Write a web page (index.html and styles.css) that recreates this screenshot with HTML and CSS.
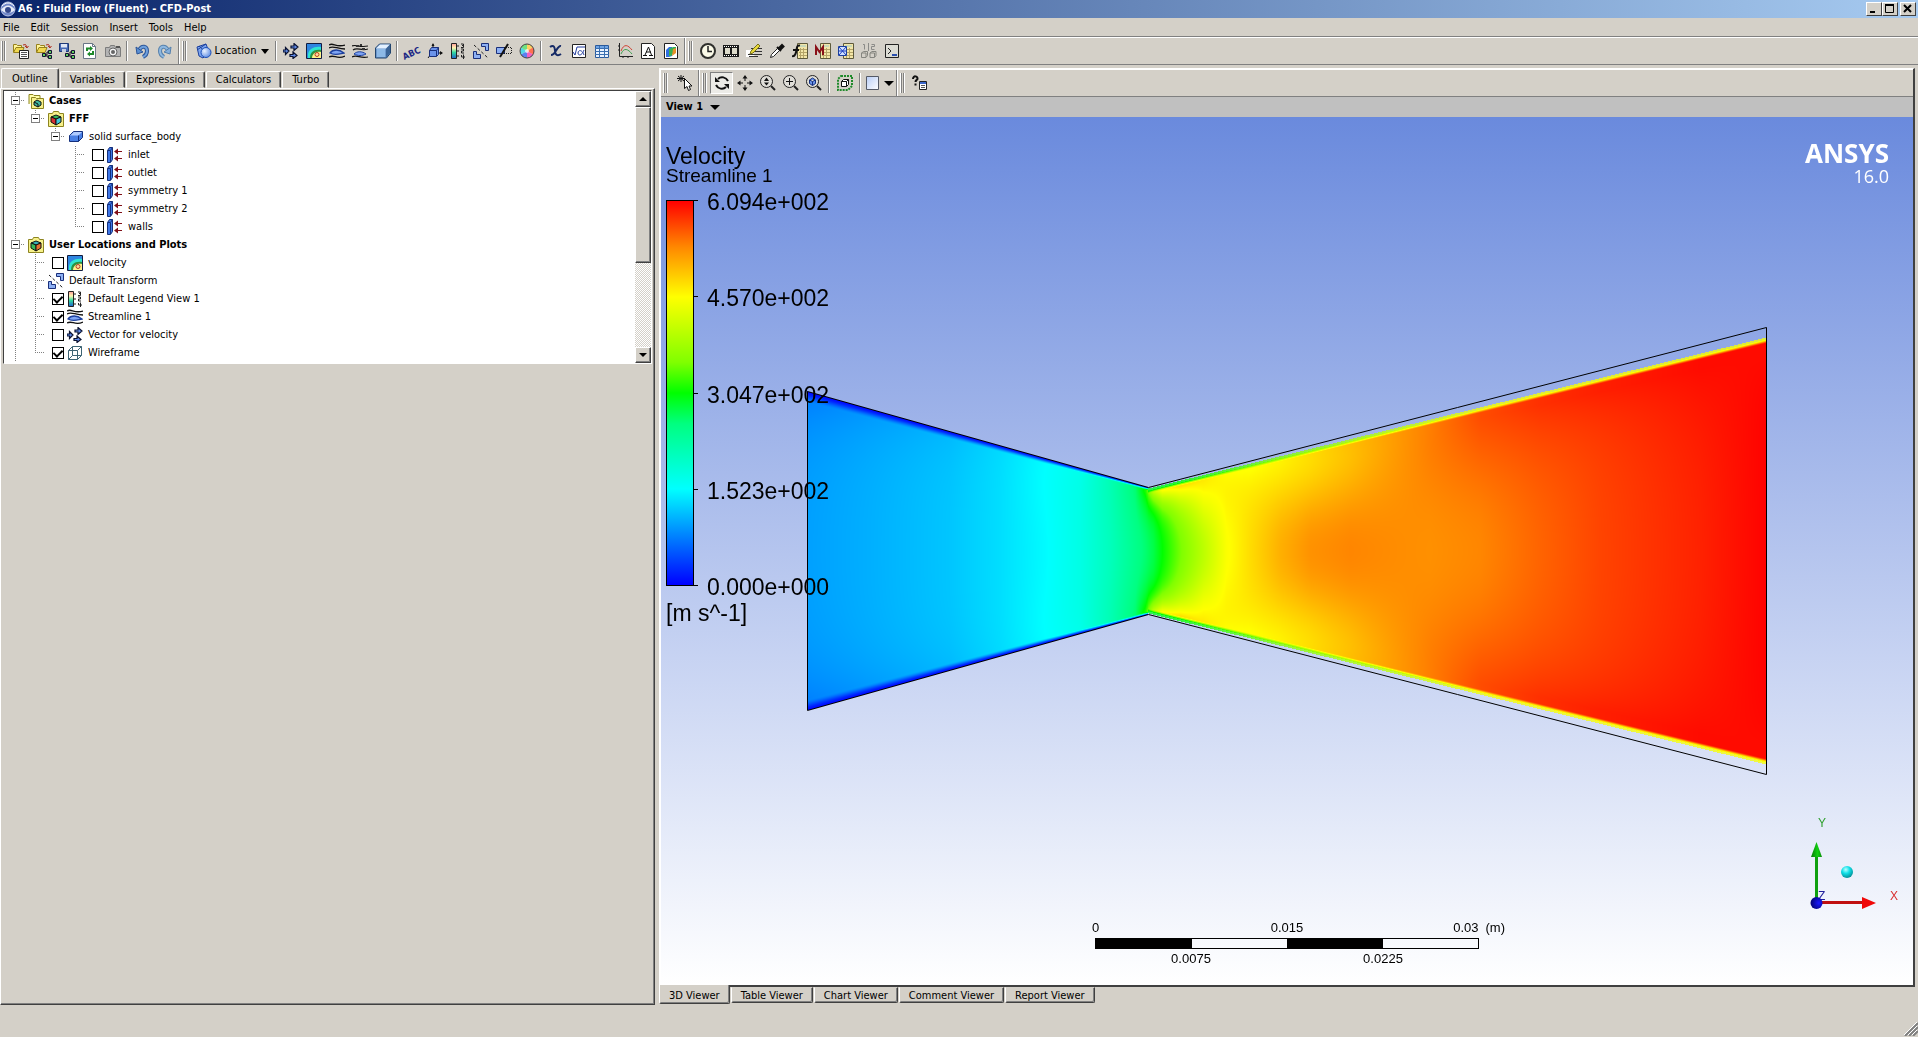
FILE: index.html
```html
<!DOCTYPE html>
<html lang="en">
<head>
  <meta charset="UTF-8">
  <meta name="viewport" content="width=device-width, initial-scale=1.0">
  <title>A6 : Fluid Flow (Fluent) - CFD-Post</title>
  <link rel="stylesheet" href="styles.css">
</head>
<body>
  <!-- icon set -->
  <svg class="sprite" aria-hidden="true">
    <defs>
      <linearGradient id="rainbow" x1="0" y1="0" x2="0" y2="1">
        <stop offset="0" stop-color="#ff9a9a"/><stop offset=".3" stop-color="#fff6b0"/>
        <stop offset=".6" stop-color="#30d8a0"/><stop offset="1" stop-color="#2060d0"/>
      </linearGradient>
      <linearGradient id="swatch" x1="0" y1="0" x2="1" y2="1">
        <stop offset="0" stop-color="#b8cdf6"/><stop offset="1" stop-color="#fff"/>
      </linearGradient>
      <radialGradient id="lens" cx=".35" cy=".35" r=".8">
        <stop offset="0" stop-color="#eaf2ff"/><stop offset="1" stop-color="#4c7fe0"/>
      </radialGradient>
    </defs>
    <symbol id="i-load" viewBox="0 0 16 16">
      <path d="M.5 9V1.500h3l1 1h4v2" fill="#fff59a" stroke="#96801c"/><path d="M.5 9.500L3 4.500h8L9 9.500z" fill="#f0d850" stroke="#96801c"/>
      <path d="M10 2q3-2 4 2m-2-1l2 2 1.500-2" fill="none" stroke="#b03020"/>
      <path d="M6.500 7.500h9v8h-9z" fill="#fff" stroke="#222"/><path d="M8 9.500h6M8 11.500h6M8 13.500h6" stroke="#555"/>
    </symbol>
    <symbol id="i-loadstate" viewBox="0 0 16 16">
      <path d="M.5 9V1.500h3l1 1h4v2" fill="#fff59a" stroke="#96801c"/><path d="M.5 9.500L3 4.500h8L9 9.500z" fill="#f0d850" stroke="#96801c"/>
      <path d="M10 2q3-2 4 2m-2-1l2 2 1.500-2" fill="none" stroke="#b03020"/>
      <path d="M8 12h3M11 9v5h2M11 9h2" stroke="#111" fill="none"/>
      <path d="M6.500 10.500h3v3h-3zM12.500 7.500h3v3h-3zM12.500 12.500h3v3h-3z" fill="#5fd05a" stroke="#113"/>
    </symbol>
    <symbol id="i-savestate" viewBox="0 0 16 16">
      <path d="M.5.500h9v8h-9z" fill="#4668b4" stroke="#203a78"/><path d="M2 1h6v3.500H2z" fill="#dfe6f4"/><path d="M3 6h4v3H3z" fill="#c8d0e0"/>
      <path d="M8 12h3M11 9v5h2M11 9h2" stroke="#111" fill="none"/>
      <path d="M6.500 10.500h3v3h-3zM12.500 7.500h3v3h-3zM12.500 12.500h3v3h-3z" fill="#5fd05a" stroke="#113"/>
    </symbol>
    <symbol id="i-refresh" viewBox="0 0 16 16">
      <path d="M1.500.500h9l3 3v12h-12z" fill="#fff" stroke="#6a7686"/><path d="M10.500.500v3h3" fill="none" stroke="#6a7686"/>
      <path d="M5 8V5.500h4M11 8v3H7" fill="none" stroke="#1f8a2a" stroke-width="2"/><path d="M8 3l3 2.500L8 8zM8 8.500L5 11l3 2.500z" fill="#1f8a2a"/>
    </symbol>
    <symbol id="i-camera" viewBox="0 0 16 16">
      <path d="M.5 4.500h4l1-2h4l1 2h5v9H.500z" fill="#b3b3b3" stroke="#7c7c7c"/><path d="M11 3h4v2h-4z" fill="#555"/>
      <circle cx="8" cy="9" r="4" fill="#f2f2f2" stroke="#666"/><circle cx="8" cy="9" r="2" fill="#666"/>
    </symbol>
    <symbol id="i-undo" viewBox="0 0 16 16">
      <path d="M5 7c3-5 8-4 8 1 0 3-2 5-4 6" fill="none" stroke="#2c5598" stroke-width="4"/><path d="M5 7c3-5 8-4 8 1 0 3-2 5-4 6" fill="none" stroke="#6fa0dc" stroke-width="2"/>
      <path d="M2 4l1 7 6-2z" fill="#5a8fd2" stroke="#2c5598"/>
    </symbol>
    <symbol id="i-redo" viewBox="0 0 16 16">
      <path d="M11 7C8 2 3 3 3 8c0 3 2 5 4 6" fill="none" stroke="#5580ac" stroke-width="4"/><path d="M11 7C8 2 3 3 3 8c0 3 2 5 4 6" fill="none" stroke="#8fb8e0" stroke-width="2"/>
      <path d="M14 4l-1 7-6-2z" fill="#86b0dc" stroke="#5580ac"/>
    </symbol>
    <symbol id="i-location" viewBox="0 0 16 16">
      <path d="M1 4l9-3 3 8-6 6-4-2z" fill="#7ea6f0" stroke="#1c3f9c"/><path d="M3 3l10 9M1 7l9-6" stroke="#1c3f9c"/>
      <circle cx="10" cy="9.500" r="5" fill="url(#lens)" stroke="#1c4fb8"/>
    </symbol>
    <symbol id="i-vector" viewBox="0 0 16 16">
      <path d="M0 7h2.500V4.500L6 8l-3.500 3.500V9H0z" fill="#5f8ae8" stroke="#0a1230" stroke-width="1.200"/>
      <path d="M8 3h3V.500L15 4l-4 3.500V5H8zM7 11.500h3V9l4 3.500-4 3V13.500H7z" fill="#5f8ae8" stroke="#0a1230" stroke-width="1.200"/>
    </symbol>
    <symbol id="i-contour" viewBox="0 0 16 16">
      <path d="M1 1h14v14H1z" fill="#2f86e0"/><path d="M2 15V11C3 6 8 3 15 4v11z" fill="#2fe5d0"/>
      <path d="M4 15c0-6 4-9 11-8v8z" fill="#2f9040"/><path d="M6 15c0-4 4-7 9-6v6z" fill="#fff28a"/>
      <circle cx="11" cy="11.500" r="2" fill="#ffd9a0" stroke="#b84020"/><path d="M.5.500h15v15H.500z" fill="none" stroke="#101c40"/>
    </symbol>
    <symbol id="i-stream" viewBox="0 0 16 16">
      <path d="M0 2c4-3 7 3 16 0M0 5c4-3 8 1 16 1M0 14c5-3 8 3 16-1" fill="none" stroke="#111" stroke-width="1.300"/>
      <path d="M1 10c3-4 9-4 14 0-5 1-9 3-14 0z" fill="#7ea4f4" stroke="#1c3f9c" stroke-width="1.300"/>
    </symbol>
    <symbol id="i-particle" viewBox="0 0 16 16">
      <path d="M0 3c4-2 7 2 16 0M1 7c4-3 8 1 15-1M0 14c5-3 8 2 16 0" fill="none" stroke="#111" stroke-width="1.200"/>
      <path d="M2 11c3-3 8-3 12 0-4 2-8 2-12 0z" fill="#7ea4f4" stroke="#1c3f9c"/>
      <path d="M4 2h3v2H4zM10 5h3v2h-3zM8 1h2v2H8z" fill="#333"/>
    </symbol>
    <symbol id="i-cube" viewBox="0 0 16 16">
      <path d="M.5 5l4-4h11v9l-4 5H.500z" fill="#6d97cc" stroke="#22456e"/><path d="M1 5.500l4-4h10l-3.500 4z" fill="#e2f0ff"/><path d="M11 5.500l4-4V10L11 14.500z" fill="#3b6496"/><path d="M2 6h8v8H2z" fill="#8db9e6"/>
    </symbol>
    <symbol id="i-coord" viewBox="0 0 16 16">
      <path d="M6 8V1M8 10h7M4 11l-3 4" stroke="#111"/><path d="M6 0L4.500 3h3zM16 10l-3-2v4z" fill="#111"/>
      <path d="M2.500 7.500l2-3h7v7l-2 2h-7z" fill="#6b93ea" stroke="#1a2f7a"/><path d="M2.500 7.500h7v6M9.500 7.500l2-3" fill="none" stroke="#1a2f7a"/>
    </symbol>
    <symbol id="i-legend" viewBox="0 0 16 16">
      <path d="M1.500.500h5v15h-5z" fill="url(#rainbow)" stroke="#222"/><path d="M7 3h2M7 8h2M7 13h2" stroke="#222"/>
      <path d="M11 1h2.500v3.500H11M12 2.500h2M11 6h2.500v2H11.500v2H14M13.500 11.500v4.500M11.500 12v2H15" fill="none" stroke="#222"/>
    </symbol>
    <symbol id="i-transform" viewBox="0 0 16 16">
      <path d="M1 2l14 13" stroke="#222" stroke-dasharray="3 2"/><path d="M8.500.500h7v7h-3v-4h-4z" fill="#8db0f4" stroke="#1a2f7a"/><path d="M.5 8.500h3v3h4v4h-7z" fill="#8db0f4" stroke="#1a2f7a"/>
    </symbol>
    <symbol id="i-clip" viewBox="0 0 16 16">
      <path d="M.5 4.500h8v6h-8z" fill="#8db0f4" stroke="#1a2f7a"/><path d="M8 4.500h7.500v6H8" fill="none" stroke="#222" stroke-dasharray="1 1"/><path d="M4 14L12 1" stroke="#111" stroke-width="2"/>
    </symbol>
    <symbol id="i-color" viewBox="0 0 16 16">
      <path d="M8 8V1a7 7 0 0 1 6 3.500z" fill="#ffd060"/><path d="M8 8l6-3.500a7 7 0 0 1 0 7z" fill="#ff7050"/><path d="M8 8l6 3.500A7 7 0 0 1 8 15z" fill="#f060c0"/>
      <path d="M8 8v7a7 7 0 0 1-6-3.500z" fill="#5a80f0"/><path d="M8 8l-6 3.500a7 7 0 0 1 0-7z" fill="#50d8e8"/><path d="M8 8L2 4.500A7 7 0 0 1 8 1z" fill="#70e080"/>
      <circle cx="8" cy="8" r="7" fill="none" stroke="#444"/><circle cx="8" cy="8" r="2" fill="#fff" opacity=".7"/>
    </symbol>
    <symbol id="i-var" viewBox="0 0 16 16">
      <path d="M2 4c4-3 5 1 5 4s2 6 6 3M13 3c-4-1-5 9-10 9" fill="none" stroke="#152a66" stroke-width="2"/>
    </symbol>
    <symbol id="i-expr" viewBox="0 0 16 16">
      <path d="M1.500 1.500h13v13h-13z" fill="#fff" stroke="#222"/><path d="M2 9l2 3 2-8h8" fill="none" stroke="#203a9c"/><path d="M13 7c-2 6-6 6-6 3s4-4 6 2" fill="none" stroke="#203a9c"/>
    </symbol>
    <symbol id="i-table" viewBox="0 0 16 16">
      <path d="M1.500 2.500h13v12h-13z" fill="#e8f2ff" stroke="#2a5a9c"/><path d="M2 3h12v2H2z" fill="#6ea4e4"/><path d="M1 5.500h14M1 8.500h14M1 11.500h14M5.500 3v12M10.500 3v12" stroke="#3a6fb0"/>
    </symbol>
    <symbol id="i-chart" viewBox="0 0 16 16">
      <path d="M2.500 0v13.500H16M1 3h2M1 7h2M6 13v2M11 13v2" fill="none" stroke="#222"/><path d="M4 8c3-8 7-6 11-1" fill="none" stroke="#d04030"/><path d="M4 11c3-7 7-5 11 0" fill="none" stroke="#40a050"/>
    </symbol>
    <symbol id="i-text" viewBox="0 0 16 16">
      <path d="M1.500.500h10l3 3v12h-13z" fill="#fff" stroke="#222"/><path d="M3 12.500h4M9 12.500h4M5 12l3.500-8L11.500 12M6 9h5" fill="none" stroke="#111"/>
    </symbol>
    <symbol id="i-figure" viewBox="0 0 16 16">
      <path d="M1.500.500h10l3 3v12h-13z" fill="#fff" stroke="#222"/><path d="M3 7l3-3h3v9l-3 1H3z" fill="#2f6fe0"/><path d="M6 6l4-2h3v3L8 13H6z" fill="#38b050"/><path d="M10 6l3-1v5l-4 3z" fill="#e8902a"/>
    </symbol>
    <symbol id="i-clock" viewBox="0 0 16 16"><circle cx="8" cy="8" r="7" fill="#fbfae8" stroke="#2f2f2c" stroke-width="2"/><path d="M8 3v5.500h4" fill="none" stroke="#222" stroke-width="1.500"/></symbol>
    <symbol id="i-film" viewBox="0 0 16 16"><path d="M0 2h16v12H0z" fill="#1a1a1a"/><path d="M2 5h5v6H2zM9 5h5v6H9z" fill="#dedccc"/><path d="M1 3.500h14M1 12.500h14" stroke="#fff" stroke-dasharray="1 1"/></symbol>
    <symbol id="i-note" viewBox="0 0 16 16"><path d="M0 7h6l3 7H0z" fill="#fff"/><path d="M5 5.500h11M8 8.500h8M2 11.500h14M3 13.500h9" stroke="#333"/><path d="M4 11l1-3 7-7 2 2-7 7z" fill="#e8d83a" stroke="#77701a"/></symbol>
    <symbol id="i-probe" viewBox="0 0 16 16"><path d="M1.500 14.500l1-3 6-6 2 2-6 6z" fill="#fff" stroke="#222"/><path d="M8 4l4 4M10 5l3-3 1.500 1.500-3 3z" stroke="#111" stroke-width="2"/></symbol>
    <symbol id="i-calc" viewBox="0 0 16 16"><path d="M5.500.500h10v15h-10z" fill="#f3e6a8" stroke="#5e5a3c"/><path d="M7 2h7v2H7z" fill="#c8d8b8"/><path d="M7 6.500h8M7 9.500h8M7 12.500h8M8.500 5v10M11.500 5v10" stroke="#b5a468"/></symbol>
    <symbol id="i-fcalc" viewBox="0 0 16 16"><use href="#i-calc"/><path d="M8 2.500C5 2 5 4 4.500 7S3 14 0 13M1 7h6" fill="none" stroke="#111" stroke-width="2"/></symbol>
    <symbol id="i-mcalc" viewBox="0 0 16 16"><use href="#i-calc"/><path d="M1 12V4l3.500 5L8 4v8" fill="none" stroke="#8a1018" stroke-width="2"/></symbol>
    <symbol id="i-xcalc" viewBox="0 0 16 16"><use href="#i-calc"/><path d="M.5 3.500h8v9h-8z" fill="#cfe0ff" stroke="#1c3f9c"/><path d="M1 4l7 8M8 4l-7 8M1 8h7" stroke="#1c3fc0"/></symbol>
    <symbol id="i-compare" viewBox="0 0 16 16"><path d="M2 1.500h1.500v5M10.500 1.500h3v2h-3v3h3M7.500 0v8" fill="none" stroke="#8b8b88"/><path d="M.5 10l2-1.500h4v4L5 14.500H.500zM9 10l2-1.500h4v4l-1.500 2H9zM.500 10H5v4M9 10h4.500v4" fill="none" stroke="#85857f"/></symbol>
    <symbol id="i-console" viewBox="0 0 16 16"><path d="M1.500 1.500h13v13h-13z" fill="#dcdcd4" stroke="#222"/><path d="M4 5l3 3-3 3" fill="none" stroke="#222"/><path d="M8 12h5" stroke="#2a50b0" stroke-width="2"/></symbol>
    <symbol id="i-select" viewBox="0 0 16 16"><path d="M4 0v7M1 1l6 5M7 1L1 6M0 3.500h8" stroke="#111"/><path d="M7.500 3.500v10l2.500-2 1.500 4 2-1-1.500-3.500h3z" fill="#fff" stroke="#111"/></symbol>
    <symbol id="i-rotate" viewBox="0 0 16 16"><path d="M4 4c3-3 8-2 10 2M12 12c-3 3-8 2-10-2" fill="none" stroke="#111" stroke-width="2"/><path d="M1 2v5h5zM15 14V9h-5z" fill="#111"/></symbol>
    <symbol id="i-pan" viewBox="0 0 16 16"><path d="M8 3v3M8 10v3M3 8h3M10 8h3" stroke="#111"/><path d="M8 0L5.500 3.500h5zM8 16l-2.500-3.500h5zM0 8l3.500-2.500v5zM16 8l-3.500-2.500v5z" fill="#111"/></symbol>
    <symbol id="i-zoom" viewBox="0 0 16 16"><circle cx="6.500" cy="6.500" r="6" fill="#e0ded8" stroke="#222"/><path d="M11 11l4 4" stroke="#222" stroke-width="2"/><path d="M6.500 2.500L4 6h5zM6.500 10.500L4 7.500h5z" fill="#111"/></symbol>
    <symbol id="i-zoomin" viewBox="0 0 16 16"><circle cx="6.500" cy="6.500" r="6" fill="#e0ded8" stroke="#222"/><path d="M11 11l4 4" stroke="#222" stroke-width="2"/><path d="M3 6.500h7M6.500 3v7" stroke="#111"/></symbol>
    <symbol id="i-fit" viewBox="0 0 16 16"><circle cx="6.500" cy="6.500" r="6" fill="#e0ded8" stroke="#222"/><path d="M11 11l4 4" stroke="#222" stroke-width="2"/><path d="M3.500 5l3-2 3 2v3.500l-3 2-3-2zM3.500 5l3 1.500 3-1.500M6.500 6.500v4" fill="#6b93ea" stroke="#15307c"/></symbol>
    <symbol id="i-highlight" viewBox="0 0 16 16"><path d="M4 1h11v10l-4 4H1V4z" fill="none" stroke="#1f8a2a" stroke-width="2" stroke-dasharray="2 1"/><path d="M4.500 6.500l2-2h5v5l-2 2h-5zM4.500 6.500h5v5M9.500 6.500l2-2" fill="#fff" stroke="#111"/></symbol>
    <symbol id="i-swatch" viewBox="0 0 16 16"><path d="M1.500 1.500h12v13h-12z" fill="url(#swatch)" stroke="#555a66"/></symbol>
    <symbol id="i-help" viewBox="0 0 16 16"><path d="M1 4c0-4 5-3 4.500 0C5 5 3.500 5 3.500 7M3.500 8.500v2" fill="none" stroke="#111" stroke-width="2"/><path d="M7.500 6.500h7v8h-7z" fill="#fff" stroke="#222"/><path d="M8 7h6v2H8z" fill="#3b66c8"/><path d="M9 10.500h4M9 12.500h4" stroke="#555"/></symbol>
    <symbol id="i-case" viewBox="0 0 16 16"><path d="M1 11V1.500h4l1 1h6V5" fill="#ffffa8" stroke="#8d8420"/><path d="M3.500 15.500V4.500h4l1 1h7v10z" fill="#f6f08a" stroke="#8d8420"/><path d="M6 9l3-2 4 2v3l-3 2-4-2z" fill="#3fb8a0" stroke="#111"/><path d="M6 9l4 2v3" fill="none" stroke="#111"/></symbol>
    <symbol id="i-fff" viewBox="0 0 16 16"><path d="M.5 15.500v-13h4l1-2h5l1 2h4v13z" fill="#f6f08a" stroke="#8d8420"/><path d="M3 6l5-2 5 2-5 2z" fill="#38b858" stroke="#111"/><path d="M3 6l5 2v6l-5-3z" fill="#d83030" stroke="#111"/><path d="M13 6L8 8v6l5-3z" fill="#3fc8d8" stroke="#111"/></symbol>
    <symbol id="i-plots" viewBox="0 0 16 16"><path d="M.5 15.500v-13h4l1-2h5l1 2h4v13z" fill="#f6f08a" stroke="#8d8420"/><path d="M3 6l5-2 5 2-5 2z" fill="#38b0b8" stroke="#111"/><path d="M3 6l5 2v6l-5-3z" fill="#38b858" stroke="#111"/><path d="M13 6L8 8v6l5-3z" fill="#e87030" stroke="#111"/></symbol>
    <symbol id="i-body" viewBox="0 0 16 16"><path d="M1.500 6.500l4-4h9v6l-4 4h-9z" fill="#4a80e4" stroke="#15307c"/><path d="M2 6.500l4-3.500h8l-3.500 3.500z" fill="#b0ccff"/><path d="M10.500 6.500v6" stroke="#15307c"/></symbol>
    <symbol id="i-bound" viewBox="0 0 16 16"><path d="M.5 3.500l2-3h3v12l-2 3h-3z" fill="#3f78e8" stroke="#15307c"/><path d="M3.500 4v11M.500 3.500h3l2-3" fill="none" stroke="#15307c"/><path d="M10 4.500h5M10 11.500h5" stroke="#801018"/><path d="M7 4.500L11 1.500v6zM7 11.500L11 8.500v6z" fill="#801018"/></symbol>
    <symbol id="i-wire" viewBox="0 0 16 16"><path d="M1.500 5.500h9v9h-9zM5.500 1.500h9v9h-9zM1.500 5.500l4-4M10.500 5.500l4-4M10.500 14.500l4-4M1.500 14.500l4-4" fill="none" stroke="#3d6474"/></symbol>
  </svg>

  <header class="titlebar">
    <svg class="app-icon" viewBox="0 0 16 16"><circle cx="8" cy="8" r="7" fill="#6f86c8" stroke="#b8c4e8"/><path d="M1 9c4-6 10-6 14 0-4 4-10 4-14 0z" fill="#e8ecf8"/><circle cx="8" cy="9" r="3" fill="#33488c"/><path d="M2 5c4-4 8-4 12 0" fill="none" stroke="#fff"/></svg>
    <h1>A6 : Fluid Flow (Fluent) - CFD-Post</h1>
    <div class="window-buttons">
      <button aria-label="Minimize"><svg viewBox="0 0 10 10"><path d="M1 8h5" stroke="#000" stroke-width="2"/></svg></button>
      <button aria-label="Maximize"><svg viewBox="0 0 10 10"><path d="M.5 1.500h8v7h-8z" fill="none" stroke="#000"/><path d="M0 1h9" stroke="#000" stroke-width="2"/></svg></button>
      <button class="close" aria-label="Close"><svg viewBox="0 0 10 10"><path d="M1 1l7 7M8 1L1 8" stroke="#000" stroke-width="2"/></svg></button>
    </div>
  </header>

  <nav class="menubar">
    <button>File</button><button>Edit</button><button>Session</button><button>Insert</button><button>Tools</button><button>Help</button>
  </nav>

  <div class="toolbar main-toolbar">
    <div class="group">
      <span class="grip"></span>
      <button aria-label="Load results"><svg><use href="#i-load"/></svg></button>
      <button aria-label="Load state"><svg><use href="#i-loadstate"/></svg></button>
      <button aria-label="Save state"><svg><use href="#i-savestate"/></svg></button>
      <button aria-label="Refresh"><svg><use href="#i-refresh"/></svg></button>
      <button aria-label="Save picture"><svg><use href="#i-camera"/></svg></button>
      <span class="sep"></span>
      <button aria-label="Undo"><svg><use href="#i-undo"/></svg></button>
      <button aria-label="Redo"><svg><use href="#i-redo"/></svg></button>
    </div>
    <div class="group">
      <span class="grip"></span>
      <button class="location"><svg><use href="#i-location"/></svg>Location<span class="arrow"></span></button>
      <span class="sep"></span>
      <button aria-label="Vector"><svg><use href="#i-vector"/></svg></button>
      <button aria-label="Contour"><svg><use href="#i-contour"/></svg></button>
      <button aria-label="Streamline"><svg><use href="#i-stream"/></svg></button>
      <button aria-label="Particle track"><svg><use href="#i-particle"/></svg></button>
      <button aria-label="Volume rendering"><svg><use href="#i-cube"/></svg></button>
      <span class="sep"></span>
      <button aria-label="Text"><svg class="abc" viewBox="0 0 20 16"><text x="0" y="14" transform="rotate(-24 8 10)">ABC</text></svg></button>
      <button aria-label="Coordinate frame"><svg><use href="#i-coord"/></svg></button>
      <button aria-label="Legend"><svg><use href="#i-legend"/></svg></button>
      <button aria-label="Instance transform"><svg><use href="#i-transform"/></svg></button>
      <button aria-label="Clip plane"><svg><use href="#i-clip"/></svg></button>
      <button aria-label="Color map"><svg><use href="#i-color"/></svg></button>
      <span class="sep"></span>
      <button aria-label="Variable"><svg><use href="#i-var"/></svg></button>
      <button aria-label="Expression"><svg><use href="#i-expr"/></svg></button>
      <button aria-label="Table"><svg><use href="#i-table"/></svg></button>
      <button aria-label="Chart"><svg><use href="#i-chart"/></svg></button>
      <button aria-label="Comment"><svg><use href="#i-text"/></svg></button>
      <button aria-label="Figure"><svg><use href="#i-figure"/></svg></button>
    </div>
    <div class="group">
      <span class="grip"></span>
      <button aria-label="Timestep selector"><svg><use href="#i-clock"/></svg></button>
      <button aria-label="Animation"><svg><use href="#i-film"/></svg></button>
      <button aria-label="Quick editor"><svg><use href="#i-note"/></svg></button>
      <button aria-label="Probe"><svg><use href="#i-probe"/></svg></button>
      <button aria-label="Function calculator"><svg><use href="#i-fcalc"/></svg></button>
      <button aria-label="Macro calculator"><svg><use href="#i-mcalc"/></svg></button>
      <button aria-label="Mesh calculator"><svg><use href="#i-xcalc"/></svg></button>
      <button aria-label="Case comparison" disabled><svg><use href="#i-compare"/></svg></button>
      <button aria-label="Command editor"><svg><use href="#i-console"/></svg></button>
    </div>
  </div>

  <main class="workspace">
    <section class="side">
      <div class="tabs">
        <button class="active">Outline</button><button>Variables</button><button>Expressions</button><button>Calculators</button><button>Turbo</button>
      </div>
      <div class="page">
        <div class="tree-box">
          <div class="tree">
            <div class="row"><i class="cell node"></i><svg><use href="#i-case"/></svg><b>Cases</b></div>
            <div class="row"><i class="cell line"></i><i class="cell node last"></i><svg><use href="#i-fff"/></svg><b>FFF</b></div>
            <div class="row"><i class="cell line"></i><i class="cell"></i><i class="cell node last"></i><svg><use href="#i-body"/></svg><span>solid surface_body</span></div>
            <div class="row"><i class="cell line"></i><i class="cell"></i><i class="cell"></i><i class="cell tee"></i><input type="checkbox" id="c1"><svg><use href="#i-bound"/></svg><label for="c1">inlet</label></div>
            <div class="row"><i class="cell line"></i><i class="cell"></i><i class="cell"></i><i class="cell tee"></i><input type="checkbox" id="c2"><svg><use href="#i-bound"/></svg><label for="c2">outlet</label></div>
            <div class="row"><i class="cell line"></i><i class="cell"></i><i class="cell"></i><i class="cell tee"></i><input type="checkbox" id="c3"><svg><use href="#i-bound"/></svg><label for="c3">symmetry 1</label></div>
            <div class="row"><i class="cell line"></i><i class="cell"></i><i class="cell"></i><i class="cell tee"></i><input type="checkbox" id="c4"><svg><use href="#i-bound"/></svg><label for="c4">symmetry 2</label></div>
            <div class="row"><i class="cell line"></i><i class="cell"></i><i class="cell"></i><i class="cell tee last"></i><input type="checkbox" id="c5"><svg><use href="#i-bound"/></svg><label for="c5">walls</label></div>
            <div class="row"><i class="cell node"></i><svg><use href="#i-plots"/></svg><b>User Locations and Plots</b></div>
            <div class="row"><i class="cell line"></i><i class="cell tee"></i><input type="checkbox" id="c6"><svg><use href="#i-contour"/></svg><label for="c6">velocity</label></div>
            <div class="row"><i class="cell line"></i><i class="cell tee"></i><svg><use href="#i-transform"/></svg><span>Default Transform</span></div>
            <div class="row"><i class="cell line"></i><i class="cell tee"></i><input type="checkbox" id="c7" checked><svg><use href="#i-legend"/></svg><label for="c7">Default Legend View 1</label></div>
            <div class="row"><i class="cell line"></i><i class="cell tee"></i><input type="checkbox" id="c8" checked><svg><use href="#i-stream"/></svg><label for="c8">Streamline 1</label></div>
            <div class="row"><i class="cell line"></i><i class="cell tee"></i><input type="checkbox" id="c9"><svg><use href="#i-vector"/></svg><label for="c9">Vector for velocity</label></div>
            <div class="row"><i class="cell line"></i><i class="cell tee last"></i><input type="checkbox" id="c10" checked><svg><use href="#i-wire"/></svg><label for="c10">Wireframe</label></div>
          </div>
          <div class="scrollbar">
            <button aria-label="Scroll up"><span class="up"></span></button>
            <div class="thumb"></div>
            <div class="track"></div>
            <button aria-label="Scroll down"><span class="down"></span></button>
          </div>
        </div>
      </div>
    </section>

    <section class="viewer">
      <div class="frame">
        <div class="toolbar">
          <div class="group">
            <span class="grip"></span>
            <button aria-label="Select"><svg><use href="#i-select"/></svg></button>
          </div>
          <div class="group">
            <span class="grip"></span>
            <button class="pressed" aria-label="Rotate"><svg><use href="#i-rotate"/></svg></button>
            <button aria-label="Pan"><svg><use href="#i-pan"/></svg></button>
            <button aria-label="Zoom"><svg><use href="#i-zoom"/></svg></button>
            <button aria-label="Zoom box"><svg><use href="#i-zoomin"/></svg></button>
            <button aria-label="Fit view"><svg><use href="#i-fit"/></svg></button>
            <span class="sep wide"></span>
            <button aria-label="Toggle highlighting"><svg><use href="#i-highlight"/></svg></button>
            <span class="sep wide"></span>
            <button class="layout" aria-label="Viewport layout"><svg><use href="#i-swatch"/></svg><span class="arrow"></span></button>
          </div>
          <div class="group">
            <span class="grip"></span>
            <button aria-label="Help on viewer"><svg><use href="#i-help"/></svg></button>
          </div>
        </div>
        <div class="viewbar"><button>View 1<span class="arrow"></span></button></div>
        <div class="scene">
          <canvas id="field"></canvas>
          <div class="legend">
            <div class="legend-title">Velocity</div>
            <div class="legend-sub">Streamline 1</div>
            <div class="legend-body">
              <div class="legend-bar"></div>
              <ul class="legend-labels">
                <li>6.094e+002</li><li>4.570e+002</li><li>3.047e+002</li><li>1.523e+002</li><li>0.000e+000</li>
              </ul>
            </div>
            <div class="legend-unit">[m s^-1]</div>
          </div>
          <div class="brand"><strong>ANSYS</strong><span>16.0</span></div>
          <div class="ruler">
            <div class="ruler-top"><span>0</span><span>0.015</span><span>0.03<em>(m)</em></span></div>
            <div class="ruler-bar"><i></i><i></i><i></i><i></i></div>
            <div class="ruler-bottom"><span>0.0075</span><span>0.0225</span></div>
          </div>
          <svg class="triad" viewBox="0 0 105 100">
            <defs>
              <radialGradient id="ball" cx=".4" cy=".3" r=".8"><stop offset="0" stop-color="#b8ffff"/><stop offset=".4" stop-color="#10e0e8"/><stop offset="1" stop-color="#007c84"/></radialGradient>
              <radialGradient id="origin" cx=".7" cy=".5" r=".8"><stop offset="0" stop-color="#1818ff"/><stop offset="1" stop-color="#000060"/></radialGradient>
              <linearGradient id="yhead"><stop offset="0" stop-color="#0a7a0a"/><stop offset=".6" stop-color="#10d010"/><stop offset="1" stop-color="#0a8a0a"/></linearGradient>
            </defs>
            <path d="M16.500 38v48" stroke="#10a010" stroke-width="3"/><path d="M16.500 28L11 43h11z" fill="url(#yhead)"/>
            <path d="M18 88.500h44" stroke="#c01010" stroke-width="3"/><path d="M76 89L62 83v12z" fill="#f00808"/>
            <text x="18" y="13" fill="#2fa02f">Y</text><text x="90" y="86" fill="#d83030">X</text><text x="18" y="86" fill="#20209c">Z</text>
            <circle cx="16.500" cy="89" r="6" fill="url(#origin)"/><circle cx="47" cy="58" r="6" fill="url(#ball)"/>
          </svg>
        </div>
      </div>
      <div class="bottom-tabs">
        <button class="active">3D Viewer</button><button>Table Viewer</button><button>Chart Viewer</button><button>Comment Viewer</button><button>Report Viewer</button>
      </div>
    </section>
  </main>

  <footer class="statusbar">
    <svg viewBox="0 0 14 14"><path d="M1 14L14 1M5 14l9-9M9 14l5-5" stroke="#808080" stroke-width="2"/><path d="M0 13L13 0M4 13l9-9M8 13l5-5" stroke="#fff"/></svg>
  </footer>
  <script src="field.js"></script>
</body>
</html>
```

FILE: styles.css
```css
* {
  box-sizing: border-box;
}
body {
  margin: 0;
  height: 100vh;
  display: flex;
  flex-direction: column;
  background: #d4d0c8;
  color: #000;
  font-family: "DejaVu Sans Condensed", "DejaVu Sans", sans-serif;
  font-size: 11px;
  line-height: 14px;
  overflow: hidden;
}
button {
  font: inherit;
  color: inherit;
  background: none;
  border: none;
  padding: 0;
}
.sprite {
  position: absolute;
  width: 0;
  height: 0;
}

/* title and menu */
.titlebar {
  display: flex;
  align-items: center;
  height: 18px;
  padding: 0 2px 0 0;
  background: linear-gradient(to right, #0a246a, #a6caf0);
}
.app-icon {
  width: 16px;
  height: 16px;
}
.titlebar h1 {
  flex: 1;
  margin: 0 0 0 2px;
  color: #fff;
  font-size: 11px;
}
.window-buttons {
  display: flex;
}
.window-buttons button {
  width: 16px;
  height: 14px;
  display: flex;
  align-items: center;
  justify-content: center;
  background: #d4d0c8;
  border: 1px solid;
  border-color: #fff #404040 #404040 #fff;
}
.window-buttons .close {
  margin-left: 2px;
}
.window-buttons svg {
  width: 10px;
  height: 10px;
}
.menubar {
  display: flex;
  gap: 11px;
  height: 19px;
  padding: 2px 3px 0;
  border-bottom: 1px solid #808080;
}

/* toolbars */
.toolbar {
  display: flex;
  height: 28px;
  border-top: 1px solid #fff;
  border-bottom: 1px solid #808080;
}
.group {
  display: flex;
  align-items: center;
  padding-right: 2px;
  border-right: 1px solid #808080;
}
.group + .group {
  border-left: 1px solid #fff;
}
.group:last-child {
  border-right: none;
}
.grip {
  width: 5px;
  height: 20px;
  margin: 0 3px 0 1px;
  border: solid #fff;
  border-width: 0 1px;
  background: linear-gradient(to right, #808080 1px, transparent 1px, transparent 2px, #808080 2px);
}
.viewer .grip {
  margin: 0 5px 0 2px;
}
.group + .group .grip {
  margin: 0 3px 0 2px;
}
.toolbar button {
  width: 23px;
  height: 22px;
  display: flex;
  align-items: center;
  justify-content: center;
}
.toolbar svg {
  width: 16px;
  height: 16px;
}
.toolbar .abc {
  width: 20px;
  overflow: visible;
}
.abc text {
  font-size: 9px;
  font-weight: bold;
  fill: #1c2784;
}
.toolbar .location {
  width: 79px;
  gap: 3px;
  margin: 0 1px 0 3px;
}
.toolbar .layout {
  width: 30px;
  gap: 3px;
}
.toolbar .pressed {
  border: 1px solid;
  border-color: #808080 #fff #fff #808080;
  background: #ecebe7;
}
.arrow {
  border: 4px solid transparent;
  border-top: 5px solid #000;
  border-bottom: none;
}
.location .arrow {
  margin-left: 2px;
}
.layout .arrow {
  border-width: 5px 5px 0;
}
.sep {
  width: 2px;
  height: 20px;
  margin: 0 2px;
  background: linear-gradient(to right, #808080 50%, #fff 50%);
}
.sep.wide {
  margin: 0 3px;
}

/* layout */
.workspace {
  flex: 1;
  min-height: 0;
  display: grid;
  grid-template-columns: 655fr 1259fr;
  gap: 4px;
  padding-top: 3px;
}
.side {
  display: flex;
  flex-direction: column;
}
.tabs {
  display: flex;
  align-items: flex-end;
  height: 20px;
  padding-left: 1px;
}
.tabs button {
  height: 17px;
  padding: 0 9px;
  border: 1px solid;
  border-color: #fff #404040 transparent #fff;
  border-radius: 2px 2px 0 0;
  margin-right: 1px;
  box-shadow: inset -1px 0 #808080;
}
.tabs .active {
  height: 20px;
  padding: 0 10px;
  border-bottom: none;
}
.page {
  flex: 1;
  margin-bottom: 1px;
  padding: 1px 2px 0;
  border: 1px solid;
  border-color: #fff #404040 #404040 #fff;
  box-shadow: inset -1px -1px #808080;
}

/* outline tree */
.tree-box {
  display: flex;
  height: 274px;
  background: #fff;
  border: 1px solid;
  border-color: #404040 #fff #fff #404040;
}
.tree {
  flex: 1;
  padding: 1px 0 0 1px;
  overflow: hidden;
}
.row {
  display: flex;
  align-items: center;
  height: 18px;
}
.row svg {
  width: 16px;
  height: 16px;
  margin: 0 5px 0 3px;
}
.row input {
  appearance: none;
  width: 12px;
  height: 12px;
  margin: 0 0 0 7px;
  border: 1px solid #000;
  background: #fff;
}
.row input:checked {
  display: grid;
  place-items: center;
}
.row input:checked::before {
  content: "";
  width: 4px;
  height: 7px;
  border: solid #000;
  border-width: 0 2px 2px 0;
  transform: rotate(45deg);
  margin-bottom: 2px;
}
.row input + svg {
  margin: 0 5px 0 3px;
}
.cell {
  width: 20px;
  height: 18px;
  background-repeat: no-repeat;
}
.line {
  background-image: repeating-linear-gradient(#808080 0 1px, #fff 1px 2px);
  background-size: 1px 18px;
  background-position: 10px 0;
}
.tee {
  background-image: repeating-linear-gradient(#808080 0 1px, #fff 1px 2px), repeating-linear-gradient(to right, #808080 0 1px, #fff 1px 2px);
  background-size: 1px 18px, 9px 1px;
  background-position: 10px 0, 10px 8px;
}
.tee.last {
  background-size: 1px 9px, 9px 1px;
}
.node {
  background-image:
    linear-gradient(#000, #000),
    linear-gradient(#fff, #fff),
    linear-gradient(#808080, #808080),
    repeating-linear-gradient(#808080 0 1px, #fff 1px 2px),
    repeating-linear-gradient(to right, #808080 0 1px, #fff 1px 2px);
  background-size: 5px 1px, 7px 7px, 9px 9px, 1px 18px, 8px 1px;
  background-position: 8px 8px, 7px 5px, 6px 4px, 10px 0, 12px 8px;
}
.node.last {
  background-size: 5px 1px, 7px 7px, 9px 9px, 1px 9px, 8px 1px;
}
.scrollbar {
  width: 16px;
  display: flex;
  flex-direction: column;
}
.scrollbar button,
.thumb {
  height: 16px;
  display: flex;
  align-items: center;
  justify-content: center;
  background: #d4d0c8;
  border: 1px solid;
  border-color: #fff #404040 #404040 #fff;
  box-shadow: inset -1px -1px #808080;
}
.scrollbar .thumb {
  height: 156px;
}
.track {
  flex: 1;
  background: repeating-conic-gradient(#d4d0c8 0 25%, #fff 0 50%) 0 0 / 2px 2px;
}
.up,
.down {
  border: 4px solid transparent;
}
.up {
  border-bottom-color: #000;
  border-top: none;
}
.down {
  border-top-color: #000;
  border-bottom: none;
}

/* 3d viewer */
.viewer {
  display: flex;
  flex-direction: column;
  min-width: 0;
  padding-right: 3px;
}
.frame {
  flex: 1;
  min-height: 0;
  display: flex;
  flex-direction: column;
  border: solid;
  border-width: 1px 2px 2px;
  border-color: #fff #404040 #404040 #fff;
}
.viewbar {
  height: 20px;
  padding: 0 5px;
  background: #c0c0c0;
}
.viewbar button {
  display: flex;
  align-items: center;
  gap: 7px;
  height: 20px;
  font-weight: bold;
}
.viewbar .arrow {
  border-width: 5px 5px 0;
}
.scene {
  position: relative;
  flex: 1;
  min-height: 0;
  overflow: hidden;
  background: linear-gradient(#6a8add, #fff);
  font-family: "Liberation Sans", Arial, sans-serif;
}
.scene canvas {
  display: block;
  width: 100%;
  height: 100%;
}
.legend {
  position: absolute;
  left: 5px;
  top: 27px;
  font-size: 23px;
  line-height: 24px;
}
.legend-title {
  height: 21px;
}
.legend-sub {
  font-size: 19px;
  line-height: 22px;
}
.legend-body {
  display: flex;
  height: 414px;
}
.legend-bar {
  width: 28px;
  margin: 13px 0 15px;
  border: 1px solid #000;
  background: linear-gradient(#f00, #ff8800 12%, #ff0 25%, #80ff00 42%, #0f0 50%, #00ff80 58%, #0ff 75%, #00f);
}
.legend-labels {
  display: flex;
  flex-direction: column;
  justify-content: space-between;
  margin: 0;
  padding: 1px 0 0;
  list-style: none;
  line-height: 28px;
}
.legend-labels li {
  display: flex;
  gap: 9px;
}
.legend-labels li::before {
  content: "";
  width: 4px;
  height: 1px;
  margin-top: 12px;
  background: #000;
}
.brand {
  position: absolute;
  right: 24px;
  top: 22px;
  display: flex;
  flex-direction: column;
  align-items: flex-end;
  color: #fff;
  font-family: "Open Sans", sans-serif;
  font-size: 18px;
  line-height: 18px;
}
.brand strong {
  font-size: 26px;
  font-weight: 700;
  line-height: 28px;
}
.ruler {
  position: absolute;
  left: 50%;
  bottom: 18px;
  width: 384px;
  margin-left: -192px;
  font-size: 13px;
  line-height: 16px;
}
.ruler-top {
  display: grid;
  grid-template-columns: 1fr auto 1fr;
  margin: 0 -26px 0 -3px;
  padding-bottom: 2px;
}
.ruler-top span:nth-child(2) {
  margin-left: -23px;
}
.ruler-top span:last-child {
  display: flex;
  justify-content: flex-end;
  gap: 7px;
}
.ruler-top em {
  font-style: normal;
}
.ruler-bar {
  display: grid;
  grid-template-columns: repeat(4, 1fr);
  height: 11px;
  border: 1px solid #000;
}
.ruler-bar i:nth-child(odd) {
  background: #000;
}
.ruler-bottom {
  display: grid;
  grid-template-columns: 1fr 1fr;
  padding-top: 2px;
  text-align: center;
}
.triad {
  position: absolute;
  right: 8px;
  bottom: 71px;
  width: 105px;
  height: 100px;
  font-size: 12px;
}
.bottom-tabs {
  display: flex;
  align-items: flex-start;
  height: 19px;
}
.bottom-tabs button {
  height: 16px;
  padding: 0 9px;
  margin-left: 1px;
  border: 1px solid;
  border-color: transparent #404040 #404040 #fff;
  border-radius: 0 0 2px 2px;
  box-shadow: inset -1px -1px #808080;
  line-height: 13px;
}
.bottom-tabs .active {
  height: 19px;
  margin: -2px 0 0;
  padding-top: 2px;
  background: #d4d0c8;
  border-top: none;
}
.statusbar {
  display: flex;
  justify-content: flex-end;
  align-items: flex-end;
  height: 33px;
  padding-bottom: 1px;
  border-bottom: 2px solid #fff;
}
.statusbar svg {
  width: 14px;
  height: 14px;
}
```

FILE: field.js
```js
// Velocity field of the nozzle, coloured with the legend's rainbow map.
const W = 1252, H = 868;

const inlet = { x: 146, top: 274, bottom: 593 };
const throat = { x: 487, top: 370, bottom: 497 };
const outlet = { x: 1105, top: 210, bottom: 657 };
const jet = { top: 220, bottom: 647 };

const map = [
  [0, 0, 0, 255], [0.25, 0, 255, 255], [0.42, 0, 255, 128], [0.5, 0, 255, 0],
  [0.58, 128, 255, 0], [0.75, 255, 255, 0], [0.87, 255, 136, 0], [1, 255, 0, 0]
];

// x, value on the axis, half way out, near the wall
const samples = [
  [146, 0.157, 0.153, 0.13], [209, 0.172, 0.17, 0.155], [289, 0.194, 0.193, 0.185],
  [339, 0.218, 0.218, 0.215], [384, 0.247, 0.25, 0.25], [419, 0.285, 0.285, 0.28],
  [449, 0.34, 0.345, 0.35], [474, 0.405, 0.415, 0.43], [484, 0.43, 0.45, 0.51],
  [492, 0.455, 0.485, 0.64], [501, 0.5, 0.54, 0.73], [519, 0.575, 0.62, 0.768],
  [542, 0.66, 0.705, 0.768], [565, 0.745, 0.757, 0.755], [589, 0.785, 0.778, 0.752],
  [619, 0.83, 0.803, 0.765], [649, 0.86, 0.822, 0.785], [689, 0.872, 0.84, 0.815],
  [739, 0.865, 0.86, 0.855], [769, 0.862, 0.872, 0.88], [819, 0.872, 0.892, 0.925],
  [879, 0.905, 0.918, 0.952], [939, 0.935, 0.94, 0.968], [1039, 0.968, 0.972, 0.988],
  [1105, 0.998, 0.998, 0.99]
];

const mix = (a, b, t) => a + (b - a) * t;
const smooth = t => {
  t = Math.min(1, Math.max(0, t));
  return t * t * (3 - 2 * t);
};

function colour(v) {
  let i = 1;
  while (i < map.length - 1 && v > map[i][0]) i++;
  const a = map[i - 1], b = map[i];
  const t = Math.min(1, Math.max(0, (v - a[0]) / (b[0] - a[0])));
  return [mix(a[1], b[1], t), mix(a[2], b[2], t), mix(a[3], b[3], t)];
}

// parabola in s^2 through the three samples keeps the contours rounded
function core(x, s) {
  let i = 1;
  while (i < samples.length - 1 && x > samples[i][0]) i++;
  const a = samples[i - 1], b = samples[i];
  const t = (x - a[0]) / (b[0] - a[0]);
  const c = mix(a[1], b[1], t), m = mix(a[2], b[2], t), e = mix(a[3], b[3], t);
  const u = Math.min(0.85, s * s);
  return c * (u - 0.25) * (u - 0.81) / 0.2025 +
    m * u * (u - 0.81) / -0.14 +
    e * u * (u - 0.25) / 0.4536;
}

function draw() {
  const canvas = document.getElementById('field');
  const w = canvas.width = canvas.clientWidth;
  const h = canvas.height = canvas.clientHeight;
  const ctx = canvas.getContext('2d');
  const kx = w / W, ky = h / H;
  const img = ctx.createImageData(w, h);

  for (let px = Math.ceil(inlet.x * kx); px < outlet.x * kx; px++) {
    const x = px / kx;
    const left = x < throat.x;
    const t = left ? (x - inlet.x) / (throat.x - inlet.x) : (x - throat.x) / (outlet.x - throat.x);
    const top = left ? mix(inlet.top, throat.top, t) : mix(throat.top + 1, jet.top, t);
    const bottom = left ? mix(inlet.bottom, throat.bottom, t) : mix(throat.bottom - 1, jet.bottom, t);
    const mid = (top + bottom) / 2;
    for (let py = Math.ceil(top * ky); py < bottom * ky; py++) {
      const y = py / ky;
      const d = Math.min(y - top, bottom - y);
      let v = core(x, Math.abs(y - mid) / (mid - top));
      if (left) {
        v = mix(0.01, v, smooth(d / mix(11, 3, t)));
      } else {
        const wall = mix(0.48, 0.74, Math.min(1, t * 1.8));
        v = mix(wall, v, smooth((d - 2) / mix(3, 4, t)));
      }
      const c = colour(v), o = (py * w + px) * 4;
      img.data[o] = c[0];
      img.data[o + 1] = c[1];
      img.data[o + 2] = c[2];
      img.data[o + 3] = !left && d < 2 ? 190 : 255;
    }
  }
  ctx.putImageData(img, 0, 0);

  // wireframe
  ctx.scale(kx, ky);
  ctx.translate(0.5, 0.5);
  ctx.beginPath();
  ctx.moveTo(inlet.x, inlet.top);
  ctx.lineTo(throat.x, throat.top);
  ctx.lineTo(outlet.x, outlet.top);
  ctx.lineTo(outlet.x, outlet.bottom);
  ctx.lineTo(throat.x, throat.bottom);
  ctx.lineTo(inlet.x, inlet.bottom);
  ctx.closePath();
  ctx.strokeStyle = '#000';
  ctx.stroke();
}

draw();
window.addEventListener('resize', draw);
```
